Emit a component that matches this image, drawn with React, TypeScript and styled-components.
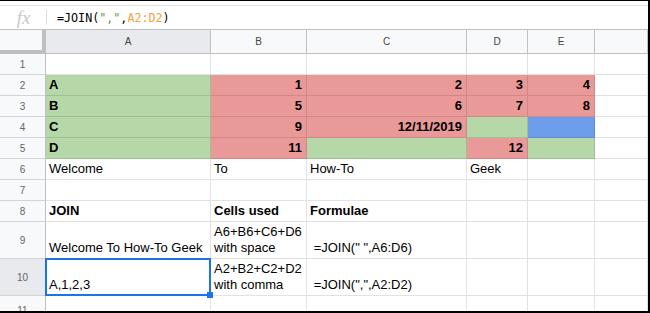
import React from "react";
import styled, { createGlobalStyle } from "styled-components";

const GlobalStyle = createGlobalStyle`
  body {
    margin: 0;
    background: #fff;
    font-family: "Liberation Sans", Arial, sans-serif;
  }
`;

const fills = {
  green: "#b6d7a8",
  red: "#ea9999",
  blue: "#6d9eeb",
};

type Fill = keyof typeof fills;

type CellData = {
  text?: string;
  fill?: Fill;
  bold?: boolean;
  right?: boolean;
};

const Frame = styled.div`
  width: 650px;
  height: 313px;
  box-sizing: border-box;
  border-top: 1px solid #000;
  border-right: 2px solid #000;
  border-bottom: 2px solid #000;
  overflow: hidden;
  background: #fff;
`;

const TopStrip = styled.div`
  height: 4px;
`;

const FormulaBar = styled.div`
  display: flex;
  align-items: center;
  height: 23px;
  border-top: 1px solid #e0e0e0;
  border-bottom: 1px solid #c0c0c0;
`;

const FxLabel = styled.div`
  width: 45px;
  text-align: center;
  font-family: "Liberation Serif", "Times New Roman", serif;
  font-style: italic;
  font-size: 19px;
  line-height: 19px;
  color: #c8c8c8;
  padding-left: 1px;
`;

const Divider = styled.div`
  width: 1px;
  height: 15px;
  background: #dadce0;
`;

const FormulaText = styled.div`
  margin-left: 10px;
  font-family: "DejaVu Sans Mono", "Liberation Mono", monospace;
  font-size: 11.7px;
  color: #000;
  white-space: pre;
`;

const Token = styled.span<{ $kind: "string" | "range" }>`
  color: ${(p) => (p.$kind === "string" ? "#5d9e43" : "#f5a03b")};
`;

const Sheet = styled.div`
  display: grid;
  grid-template-columns: 46px 165px 96px 160px 61px 67px 1fr;
  grid-template-rows: 24px repeat(8, 21px) 37px 37px 30px;
`;

const Corner = styled.div`
  box-sizing: border-box;
  background: #f8f9fa;
  border-right: 4px solid #bfbfbf;
  border-bottom: 4px solid #bfbfbf;
`;

const ColHead = styled.div<{ $active?: boolean }>`
  box-sizing: border-box;
  display: flex;
  align-items: center;
  justify-content: center;
  background: ${(p) => (p.$active ? "#e8eaed" : "#f8f9fa")};
  border-right: 1px solid #c0c0c0;
  border-bottom: 1px solid #c0c0c0;
  font-size: 10px;
  color: #444;
`;

const RowHead = styled.div<{ $active?: boolean }>`
  box-sizing: border-box;
  display: flex;
  align-items: center;
  justify-content: center;
  background: ${(p) => (p.$active ? "#e8eaed" : "#f8f9fa")};
  border-right: 1px solid #c0c0c0;
  border-bottom: 1px solid #d4d4d4;
  font-size: 10px;
  color: #666;
`;

const Cell = styled.div<{ $fill?: Fill; $bold?: boolean; $right?: boolean }>`
  position: relative;
  box-sizing: border-box;
  display: flex;
  align-items: flex-end;
  justify-content: ${(p) => (p.$right ? "flex-end" : "flex-start")};
  padding: 0 4px 2px 3px;
  background: ${(p) => (p.$fill ? fills[p.$fill] : "#fff")};
  border-right: 1px solid rgba(0, 0, 0, 0.115);
  border-bottom: 1px solid rgba(0, 0, 0, 0.115);
  font-size: 13px;
  line-height: 16px;
  font-weight: ${(p) => (p.$bold ? 700 : 400)};
  color: #000;
  white-space: pre-wrap;
  overflow: hidden;
`;

const SelectedCell = styled(Cell)`
  overflow: visible;
  z-index: 1;
`;

const Selection = styled.div`
  position: absolute;
  inset: -1px;
  border: 2px solid #1a73e8;
  pointer-events: none;
`;

const Handle = styled.div`
  position: absolute;
  right: -4px;
  bottom: -4px;
  width: 6px;
  height: 6px;
  background: #1a73e8;
`;

const columns = ["A", "B", "C", "D", "E", ""];

const n = (text: string, fill: Fill): CellData => ({ text, fill, bold: true, right: true });

const rows: CellData[][] = [
  [],
  [{ text: "A", fill: "green", bold: true }, n("1", "red"), n("2", "red"), n("3", "red"), n("4", "red")],
  [{ text: "B", fill: "green", bold: true }, n("5", "red"), n("6", "red"), n("7", "red"), n("8", "red")],
  [
    { text: "C", fill: "green", bold: true },
    n("9", "red"),
    n("12/11/2019", "red"),
    { fill: "green" },
    { fill: "blue" },
  ],
  [
    { text: "D", fill: "green", bold: true },
    n("11", "red"),
    { fill: "green" },
    n("12", "red"),
    { fill: "green" },
  ],
  [{ text: "Welcome" }, { text: "To" }, { text: "How-To" }, { text: "Geek" }],
  [],
  [
    { text: "JOIN", bold: true },
    { text: "Cells used", bold: true },
    { text: "Formulae", bold: true },
  ],
  [
    { text: "Welcome To How-To Geek" },
    { text: "A6+B6+C6+D6 with space" },
    { text: ' =JOIN(" ",A6:D6)' },
  ],
  [
    { text: "A,1,2,3" },
    { text: "A2+B2+C2+D2 with comma" },
    { text: ' =JOIN(",",A2:D2)' },
  ],
  [],
];

const selectedRow = 10;

export default function App() {
  return (
    <>
      <GlobalStyle />
      <Frame>
        <TopStrip />
        <FormulaBar>
          <FxLabel>fx</FxLabel>
          <Divider />
          <FormulaText>
            =JOIN(<Token $kind="string">","</Token>,<Token $kind="range">A2:D2</Token>)
          </FormulaText>
        </FormulaBar>
        <Sheet>
          <Corner />
          {columns.map((c, i) => (
            <ColHead key={i} $active={c === "A"}>
              {c}
            </ColHead>
          ))}
          {rows.map((row, r) => {
            const rowNum = r + 1;
            return (
              <React.Fragment key={rowNum}>
                <RowHead $active={rowNum === selectedRow}>{rowNum}</RowHead>
                {columns.map((_, c) => {
                  const cell = row[c] || {};
                  if (rowNum === selectedRow && c === 0) {
                    return (
                      <SelectedCell key={c} $fill={cell.fill} $bold={cell.bold} $right={cell.right}>
                        {cell.text}
                        <Selection>
                          <Handle />
                        </Selection>
                      </SelectedCell>
                    );
                  }
                  return (
                    <Cell key={c} $fill={cell.fill} $bold={cell.bold} $right={cell.right}>
                      {cell.text}
                    </Cell>
                  );
                })}
              </React.Fragment>
            );
          })}
        </Sheet>
      </Frame>
    </>
  );
}
